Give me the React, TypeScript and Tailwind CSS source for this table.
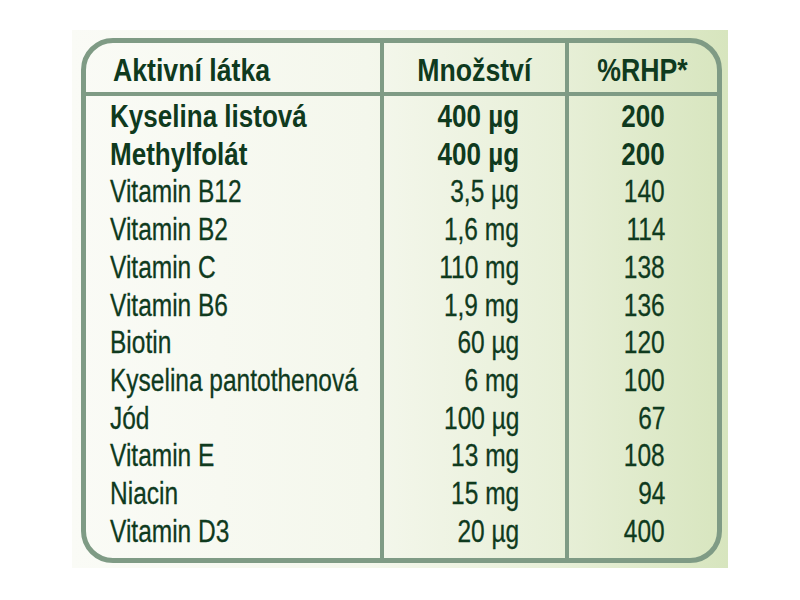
import React from "react";

type Row = { name: string; amount: string; rhp: string; bold?: boolean };

const rows: Row[] = [
  { name: "Kyselina listová", amount: "400 µg", rhp: "200", bold: true },
  { name: "Methylfolát", amount: "400 µg", rhp: "200", bold: true },
  { name: "Vitamin B12", amount: "3,5 µg", rhp: "140" },
  { name: "Vitamin B2", amount: "1,6 mg", rhp: "114" },
  { name: "Vitamin C", amount: "110 mg", rhp: "138" },
  { name: "Vitamin B6", amount: "1,9 mg", rhp: "136" },
  { name: "Biotin", amount: "60 µg", rhp: "120" },
  { name: "Kyselina pantothenová", amount: "6 mg", rhp: "100" },
  { name: "Jód", amount: "100 µg", rhp: "67" },
  { name: "Vitamin E", amount: "13 mg", rhp: "108" },
  { name: "Niacin", amount: "15 mg", rhp: "94" },
  { name: "Vitamin D3", amount: "20 µg", rhp: "400" },
];

function Cell({ text, bold, align }: { text: string; bold?: boolean; align: "left" | "right" }) {
  return (
    <div
      className={`text-[31px] leading-[37.7px] whitespace-nowrap ${
        bold ? "font-bold" : "[-webkit-text-stroke:0.3px_#0f3a1e]"
      }`}
    >
      <span
        className={`inline-block ${align === "left" ? "origin-left" : "origin-right"} ${
          bold ? "scale-x-[0.84]" : "scale-x-[0.79]"
        }`}
      >
        {text}
      </span>
    </div>
  );
}

function Head({ text, align }: { text: string; align: "left" | "center" }) {
  return (
    <span
      className={`inline-block scale-x-[0.86] ${align === "left" ? "origin-left" : "origin-center"}`}
    >
      {text}
    </span>
  );
}

export default function App() {
  return (
    <div className="w-[800px] h-[600px] bg-white pt-[30px] pl-[72px] font-['Liberation_Sans',Arial,sans-serif]">
      <div className="w-[656px] h-[538px] bg-[linear-gradient(90deg,#fafbf6_0%,#f4f7ec_45%,#e7efd7_75%,#d7e5be_100%)] pt-[8px] pl-[9px]">
        <div className="w-[641px] h-[525px] border-[5px] border-[#7f9b85] rounded-[32px] flex text-[#0f3a1e]">
          {/* Column 1 */}
          <div className="w-[294px] flex flex-col">
            <div className="h-[53px] border-b-[4px] border-[#7f9b85] pt-[7px] pl-[27px] text-[31px] leading-[42px] font-bold whitespace-nowrap">
              <Head text="Aktivní látka" align="left" />
            </div>
            <div className="pt-[2px] pl-[24px]">
              {rows.map((r) => (
                <Cell key={r.name} text={r.name} bold={r.bold} align="left" />
              ))}
            </div>
          </div>
          {/* Column 2 */}
          <div className="w-[185px] border-l-[4px] border-[#7f9b85] flex flex-col">
            <div className="h-[53px] border-b-[4px] border-[#7f9b85] pt-[7px] text-center text-[31px] leading-[42px] font-bold whitespace-nowrap">
              <Head text="Množství" align="center" />
            </div>
            <div className="pt-[2px] pr-[46px] text-right">
              {rows.map((r) => (
                <Cell key={r.name} text={r.amount} bold={r.bold} align="right" />
              ))}
            </div>
          </div>
          {/* Column 3 */}
          <div className="w-[152px] border-l-[4px] border-[#7f9b85] flex flex-col">
            <div className="h-[53px] border-b-[4px] border-[#7f9b85] pt-[7px] text-center text-[31px] leading-[42px] font-bold whitespace-nowrap">
              <Head text="%RHP*" align="center" />
            </div>
            <div className="pt-[2px] pr-[52px] text-right">
              {rows.map((r) => (
                <Cell key={r.name} text={r.rhp} bold={r.bold} align="right" />
              ))}
            </div>
          </div>
        </div>
      </div>
    </div>
  );
}
